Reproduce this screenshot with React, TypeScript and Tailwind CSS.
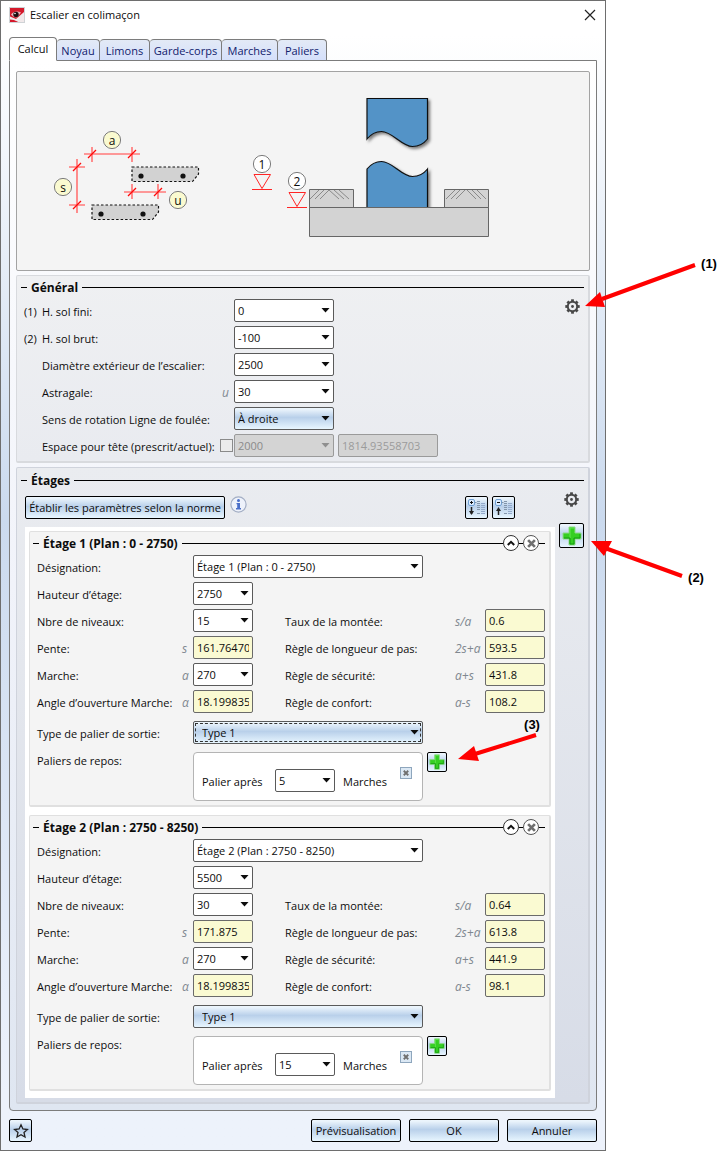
import React, { ReactNode, useId, useState } from 'react';
import { clsx } from 'clsx';

const INK = '#0c0c0c';

function CaretIcon({ className }: { className?: string }) {
  return (
    <svg className={clsx('pointer-events-none', className)} width="9" height="5" viewBox="0 0 9 5" aria-hidden="true">
      <path d="M0.5 0h8L4.5 4.500z" fill="currentColor" />
    </svg>
  );
}

function GearIcon() {
  return (
    <svg width="15" height="15" viewBox="0 0 15 15" fill="none" stroke="#484848" aria-hidden="true">
      <circle cx="7.5" cy="7.5" r="4.7" strokeWidth="2" />
      <circle cx="7.5" cy="7.5" r="1.4" fill="#484848" stroke="none" />
      {[0, 45, 90, 135, 180, 225, 270, 315].map((angle) => (
        <path key={angle} d="M7.5 0.3V2.8" strokeWidth="2.8" transform={`rotate(${angle} 7.5 7.5)`} />
      ))}
    </svg>
  );
}

function PlusIcon({ size }: { size: number }) {
  return (
    <svg width={size} height={size} viewBox="0 0 20 20" aria-hidden="true">
      <path d="M7 1h6v6h6v6h-6v6H7v-6H1V7h6z" fill="#35cf22" stroke="#8fd88a" strokeWidth="1" />
      <path d="M8 12V2h4" fill="none" stroke="#64e552" strokeWidth="1" />
      <path d="M2 12h6v6h4v-6h6V8" fill="none" stroke="#159d12" strokeWidth="1" />
    </svg>
  );
}

function CrossIcon({ size }: { size: number }) {
  return (
    <svg width={size} height={size} viewBox="0 0 8 8" aria-hidden="true">
      <path d="M1 1l6 6M7 1L1 7" stroke="#6f6f6f" strokeWidth="2.4" />
    </svg>
  );
}

function LevelsIcon({ expand }: { expand: boolean }) {
  return (
    <svg width="19" height="19" viewBox="0 0 19 19" fill="none" aria-hidden="true">
      <rect x="1.5" y="1.5" width="6" height="6" rx="1.5" fill="#dcecff" stroke="#6f9fd2" />
      <path d={expand ? 'M3 4.5h3M4.5 3v3' : 'M3 4.5h3'} stroke="#111" />
      <path d="M7.5 4.5h2" stroke="#8396ab" />
      <path d={expand ? 'M4.5 9v7' : 'M4.5 17v-6'} stroke="#222" strokeWidth="1.5" />
      <path d={expand ? 'M2 13h5l-2.5 4z' : 'M2 13h5l-2.5-4z'} fill="#222" />
      <path d="M10 3.5h3M10 5.5h3M10 7.5h3M10 9.5h3M10 11.5h3M10 15.5h3" stroke="#8396ab" />
      <path d="M14 5.5h4M14 7.5h4M14 9.5h4M14 11.5h4M14 13.5h4M14 15.5h4" stroke="#94aacb" />
    </svg>
  );
}

function InfoIcon() {
  return (
    <svg width="17" height="17" viewBox="0 0 17 17" aria-hidden="true">
      <circle cx="8.5" cy="8.5" r="7.6" fill="#eef2fb" stroke="#a3aec4" strokeWidth="1.2" />
      <circle cx="8.5" cy="4.6" r="1.5" fill="#4a6fc9" />
      <path d="M6.5 7h3.500v5h1v1.500h-5V12h1.200V8.300h-0.700z" fill="#4a6fc9" />
    </svg>
  );
}

function AppLogo() {
  return (
    <svg width="16" height="16" viewBox="0 0 16 16" aria-hidden="true">
      <rect x="0.5" y="0.5" width="15" height="15" fill="#d4192b" stroke="#cfd3d6" />
      <path d="M1 9.500L7 12l8-7v10H9L1 13z" fill="#f1e9ea" />
      <path d="M1 12.500l4 0.500l4 2H1z" fill="#d4192b" />
      <path d="M2 7.500C5 4 9 4 12 5.500L8 10.500C5.500 10.500 3.500 9.500 2 7.500z" fill="#e9b9bd" />
      <circle cx="7" cy="7.500" r="2.700" fill="#1d0d10" />
      <circle cx="6" cy="6.500" r="0.8" fill="#fff" />
    </svg>
  );
}

interface DropDownProps {
  id?: string;
  label?: string;
  value: string;
  className?: string;
  variant?: 'plain' | 'glossy' | 'focused';
  disabled?: boolean;
}

function DropDown({ id, label, value, className, variant = 'plain', disabled }: DropDownProps) {
  return (
    <span className={clsx('grid shrink-0 items-center', className)}>
      <select
        id={id}
        aria-label={label}
        defaultValue={value}
        disabled={disabled}
        className={clsx(
          'col-start-1 row-start-1 h-[23px] w-full appearance-none rounded-xs border pl-[3px]',
          disabled && 'border-[#9a9a9a] bg-[#d4d4d4] text-[#8a8a8a]',
          !disabled && 'border-[#5a5a5a]',
          !disabled && variant === 'plain' && 'bg-white',
          variant !== 'plain' && 'bg-linear-to-b from-[#ecf5fc] from-5% via-[#b9d0ea] via-45% to-[#e8f6ff]',
          variant === 'focused' ? 'outline-1 -outline-offset-3 outline-dashed outline-[#333]' : 'outline-none'
        )}
      >
        <option>{value}</option>
      </select>
      <CaretIcon className={clsx('col-start-1 row-start-1 mr-1 justify-self-end', disabled && 'text-[#8f8f8f]')} />
    </span>
  );
}

function ResultField({ id, value }: { id: string; value: string }) {
  return (
    <input
      id={id}
      readOnly
      defaultValue={value}
      className="h-[23px] w-[60px] rounded-xs border border-[#6a6a6a] bg-[#fafad2] px-[3px] outline-none"
    />
  );
}

function PushButton({ children, className, label }: { children: ReactNode; className?: string; label?: string }) {
  return (
    <button
      type="button"
      aria-label={label}
      className={clsx(
        'flex shrink-0 items-center justify-center overflow-hidden rounded-xs border border-black bg-linear-to-b from-[#ecf5fc] from-5% via-[#b9d0ea] via-45% to-[#e8f6ff] whitespace-nowrap',
        className
      )}
    >
      {children}
    </button>
  );
}

function GroupTitle({ children, actions }: { children: ReactNode; actions?: ReactNode }) {
  return (
    <div className="flex h-4 items-center">
      <span className="h-px w-1.5 bg-black" />
      <h2 className="px-1 pt-px text-xs font-bold">{children}</h2>
      <span className="h-px flex-1 bg-black" />
      {actions}
    </div>
  );
}

function StairDiagram() {
  return (
    <div className="overflow-hidden rounded-xs border border-[#a3a3a3] bg-[#f4f4f4]">
      <svg width="572" height="198" viewBox="17 72 572 198" fill="none" className="block" role="img" aria-label="Schéma de l’escalier">
        <defs>
          <filter id="post-shadow" x="-20%" y="-20%" width="150%" height="150%">
            <feDropShadow dx="2" dy="2" stdDeviation="1.5" floodColor="#000" floodOpacity="0.5" />
          </filter>
          <clipPath id="post-clip">
            <path d="M340 80h110v127H340z" />
          </clipPath>
        </defs>

        {/* steps */}
        <g fill="#d2d2d2" stroke="#111" strokeWidth="1.2" strokeDasharray="2.5 2">
          <path d="M132 167h66.5v7l-6 7.500H132z" />
          <path d="M92 205h66.500v7l-6 7.500H92z" />
        </g>
        <g fill="#111">
          <circle cx="141" cy="176" r="2.600" />
          <circle cx="183" cy="176" r="2.600" />
          <circle cx="101" cy="214" r="2.600" />
          <circle cx="143" cy="214" r="2.600" />
        </g>

        {/* dimension lines */}
        <path
          d="M84 154h56M92 147v15M132 147v15M77 159v54M69 167h16M69 205h16M124 192h42M132 184v15M158 184v15"
          stroke="#ff7a7a"
          strokeWidth="1.700"
        />
        <path
          d="M88 158l8-8M128 158l8-8M73 171l8-8M73 209l8-8M128 196l8-8M154 196l8-8"
          stroke="#ff0a0a"
          strokeWidth="1.300"
        />
        <g fill="#fafad0" stroke="#7c7c7c">
          <circle cx="112" cy="140" r="8.600" />
          <circle cx="63" cy="187" r="8.600" />
          <circle cx="178" cy="200" r="8.600" />
        </g>

        {/* levels */}
        <g fill="#fff" stroke="#7c7c7c">
          <circle cx="262" cy="164" r="8.600" />
          <circle cx="297" cy="181" r="8.600" />
        </g>
        <path
          d="M254 174.500h16.500L262 188.500zM252 189.500h20M289 192.500h16.500L297 206.500zM287 207.500h20"
          stroke="#ff2525"
        />
        <g fill={INK} fontSize="12" textAnchor="middle">
          <text x="112" y="145">a</text>
          <text x="63" y="192">s</text>
          <text x="178" y="205">u</text>
          <text x="262" y="169">1</text>
          <text x="297" y="186">2</text>
        </g>

        {/* central post */}
        <g clipPath="url(#post-clip)" fill="#5293c7" stroke="#111" strokeWidth="1.200">
          <path
            filter="url(#post-shadow)"
            d="M367 98.500h60.500V139c-4 5-10 7.500-15 7.500c-11 0-20-15-31-15c-5 0-10.500 2.500-14.500 7.500z"
          />
          <path
            filter="url(#post-shadow)"
            d="M367 215V169c4-5 9.500-7.500 14.500-7.500c11 0 20 15 31 15c5 0 11-2.500 15-7.500v46z"
          />
        </g>

        {/* slab */}
        <g fill="#d3d3d3" stroke="#666">
          <path d="M309.500 189.500h44v18h-44zM444.500 189.500h44v18h-44zM309.500 207.500h179v29h-179z" />
        </g>
        <path
          d="M319 190l-9 9M324 190l-9 9M329 190l-9 9M329 190l10 9M334 190l10 9M339 190l10 9M455 190l-9 9M460 190l-9 9M465 190l-9 9M467 190l9 9M472 190l9 9M477 190l9 9"
          stroke="#8a8a8a"
        />
      </svg>
    </div>
  );
}

interface GeneralRowProps {
  number?: string;
  label: string;
  symbol?: string;
  value: string;
  variant?: 'plain' | 'glossy';
}

function GeneralRow({ number, label, symbol, value, variant }: GeneralRowProps) {
  const id = useId();
  return (
    <div className="flex h-[23px] items-center">
      <span className="w-[18px] pt-0.5">{number}</span>
      <label htmlFor={id} className="w-[180px] pt-0.5 whitespace-nowrap">{label}</label>
      <i className="w-3 pt-0.5 text-xs text-[#808890]">{symbol}</i>
      <DropDown id={id} value={value} variant={variant} className="w-[100px]" />
    </div>
  );
}

function General() {
  return (
    <section className="rounded-xs border border-r-2 border-b-2 border-[#d8dade] bg-linear-to-b from-[#eff0f2] to-[#e9ebf0] pt-[3px] pr-1 pb-1 pl-1">
      <GroupTitle>Général</GroupTitle>
      <div className="flex items-start justify-between pt-1 pr-1 pl-[3px]">
        <div className="grid gap-1">
          <GeneralRow number="(1)" label="H. sol fini:" value="0" />
          <GeneralRow number="(2)" label="H. sol brut:" value="-100" />
          <GeneralRow label="Diamètre extérieur de l’escalier:" value="2500" />
          <GeneralRow label="Astragale:" symbol="u" value="30" />
          <GeneralRow label="Sens de rotation Ligne de foulée:" value="À droite" variant="glossy" />
          <div className="flex h-[23px] items-center">
            <label htmlFor="headroom" className="w-[196px] pt-0.5 pl-[18px] whitespace-nowrap">
              Espace pour tête (prescrit/actuel):
            </label>
            <input
              id="headroom"
              type="checkbox"
              className="mr-px size-[13px] appearance-none border border-[#8a8a8a] bg-[#ececec]"
            />
            <DropDown label="Espace prescrit" value="2000" disabled className="w-[100px]" />
            <input
              aria-label="Espace actuel"
              disabled
              defaultValue="1814.93558703"
              className="ml-1 h-[23px] w-[100px] rounded-xs border border-[#9a9a9a] bg-[#d4d4d4] px-[3px] text-[#9b9b9b]"
            />
          </div>
        </div>
        <button type="button" aria-label="Réglages généraux">
          <GearIcon />
        </button>
      </div>
    </section>
  );
}

interface Stage {
  title: string;
  height: string;
  levels: string;
  slope: string;
  tread: string;
  angle: string;
  ratio: string;
  pace: string;
  safety: string;
  comfort: string;
  restAfter: string;
  focused?: boolean;
}

const stages: Stage[] = [
  {
    title: 'Étage 1 (Plan : 0 - 2750)',
    height: '2750',
    levels: '15',
    slope: '161.764706',
    tread: '270',
    angle: '18.199835',
    ratio: '0.6',
    pace: '593.5',
    safety: '431.8',
    comfort: '108.2',
    restAfter: '5',
    focused: true
  },
  {
    title: 'Étage 2 (Plan : 2750 - 8250)',
    height: '5500',
    levels: '30',
    slope: '171.875',
    tread: '270',
    angle: '18.199835',
    ratio: '0.64',
    pace: '613.8',
    safety: '441.9',
    comfort: '98.1',
    restAfter: '15'
  }
];

function FieldLabel({ htmlFor, symbol, children }: { htmlFor: string; symbol?: string; children: ReactNode }) {
  return (
    <>
      <label htmlFor={htmlFor} className="pt-0.5 whitespace-nowrap">{children}</label>
      <i className="pt-0.5 text-xs text-[#808890]">{symbol}</i>
    </>
  );
}

function StageCard({ stage }: { stage: Stage }) {
  const id = useId();
  const [open, setOpen] = useState(true);

  return (
    <section className="rounded-xs border border-r-2 border-b-2 border-[#e0e0e0] bg-[#f4f4f4] pt-[3px] pr-1 pb-1 pl-[3px]">
      <GroupTitle
        actions={
          <>
            <button
              type="button"
              aria-label="Réduire"
              aria-expanded={open}
              onClick={() => setOpen(!open)}
              className="flex size-4 items-center justify-center rounded-full border border-[#333] bg-white"
            >
              <svg width="8" height="6" viewBox="0 0 8 6" fill="none" aria-hidden="true">
                <path d="M0.8 5L4 1.8L7.200 5" stroke="#111" strokeWidth="2" />
              </svg>
            </button>
            <span className="h-px w-1 bg-black" />
            <button
              type="button"
              aria-label="Supprimer l’étage"
              className="flex size-4 items-center justify-center rounded-full border border-[#555] bg-white"
            >
              <CrossIcon size={9} />
            </button>
            <span className="h-px w-1.5 bg-black" />
          </>
        }
      >
        {stage.title}
      </GroupTitle>
      {open && (
        <div className="pt-1 pl-1">
          <div className="grid auto-rows-[23px] grid-cols-[145px_11px_60px_32px_170px_30px_60px] items-center gap-y-1">
            <FieldLabel htmlFor={id + 'name'}>Désignation:</FieldLabel>
            <DropDown id={id + 'name'} value={stage.title} className="col-span-5 w-[230px]" />

            <FieldLabel htmlFor={id + 'height'}>Hauteur d’étage:</FieldLabel>
            <DropDown id={id + 'height'} value={stage.height} className="col-span-5 w-[60px]" />

            <FieldLabel htmlFor={id + 'levels'}>Nbre de niveaux:</FieldLabel>
            <DropDown id={id + 'levels'} value={stage.levels} />
            <span />
            <FieldLabel htmlFor={id + 'ratio'} symbol="s/a">Taux de la montée:</FieldLabel>
            <ResultField id={id + 'ratio'} value={stage.ratio} />

            <FieldLabel htmlFor={id + 'slope'} symbol="s">Pente:</FieldLabel>
            <ResultField id={id + 'slope'} value={stage.slope} />
            <span />
            <FieldLabel htmlFor={id + 'pace'} symbol="2s+a">Règle de longueur de pas:</FieldLabel>
            <ResultField id={id + 'pace'} value={stage.pace} />

            <FieldLabel htmlFor={id + 'tread'} symbol="a">Marche:</FieldLabel>
            <DropDown id={id + 'tread'} value={stage.tread} />
            <span />
            <FieldLabel htmlFor={id + 'safety'} symbol="a+s">Règle de sécurité:</FieldLabel>
            <ResultField id={id + 'safety'} value={stage.safety} />

            <FieldLabel htmlFor={id + 'angle'} symbol="α">Angle d’ouverture Marche:</FieldLabel>
            <ResultField id={id + 'angle'} value={stage.angle} />
            <span />
            <FieldLabel htmlFor={id + 'comfort'} symbol="a-s">Règle de confort:</FieldLabel>
            <ResultField id={id + 'comfort'} value={stage.comfort} />
          </div>

          <div className="mt-2 flex items-center">
            <label htmlFor={id + 'type'} className="w-[156px] pt-0.5">Type de palier de sortie:</label>
            <DropDown
              id={id + 'type'}
              value="Type 1"
              variant={stage.focused ? 'focused' : 'glossy'}
              className="w-[230px] [&>select]:pl-2"
            />
          </div>

          <div className="mt-2 flex items-start">
            <span className="w-[156px] pt-px">Paliers de repos:</span>
            <div className="flex h-[49px] w-[230px] items-end rounded-sm border border-[#b4b4b4] bg-white pb-2 pl-2">
              <label htmlFor={id + 'rest'} className="w-[73px] pb-0.5">Palier après</label>
              <DropDown id={id + 'rest'} value={stage.restAfter} className="w-[60px]" />
              <span className="w-[65px] pb-0.5 pl-2">Marches</span>
              <button
                type="button"
                aria-label="Supprimer le palier"
                className="mb-[13px] flex size-3 items-center justify-center border border-[#8ea6bd] bg-[#dbe8f4]"
              >
                <CrossIcon size={6} />
              </button>
            </div>
            <PushButton label="Ajouter un palier" className="ml-1 size-5">
              <PlusIcon size={16} />
            </PushButton>
          </div>
        </div>
      )}
    </section>
  );
}

function Stages() {
  return (
    <section className="rounded-xs border border-r-2 border-b-2 border-[#cfd3dc] bg-linear-to-b from-[#eaecf0] to-[#d7dce7] pt-1 pr-1 pb-1 pl-1">
      <GroupTitle>Étages</GroupTitle>
      <div className="flex gap-1 pt-1 pl-1">
        <div className="min-w-0 flex-1">
          <div className="mt-1 flex">
            <PushButton className="h-[23px] w-[200px]">Établir les paramètres selon la norme</PushButton>
            <button type="button" aria-label="Informations" className="ml-[5px] self-start">
              <InfoIcon />
            </button>
            <div className="mr-10 ml-auto flex gap-1">
              <PushButton label="Tout développer" className="size-[23px]">
                <LevelsIcon expand />
              </PushButton>
              <PushButton label="Tout réduire" className="size-[23px]">
                <LevelsIcon expand={false} />
              </PushButton>
            </div>
          </div>
          <div className="mt-2 grid gap-2 bg-white p-1 pb-[7px]">
            {stages.map((stage) => (
              <StageCard key={stage.title} stage={stage} />
            ))}
          </div>
        </div>
        <div className="flex flex-col items-center gap-4">
          <button type="button" aria-label="Réglages des étages">
            <GearIcon />
          </button>
          <PushButton label="Ajouter un étage" className="size-[25px]">
            <PlusIcon size={20} />
          </PushButton>
        </div>
      </div>
    </section>
  );
}

const tabs = [
  { name: 'Calcul', width: 'w-12' },
  { name: 'Noyau', width: 'w-[43px]' },
  { name: 'Limons', width: 'w-[50px]' },
  { name: 'Garde-corps', width: 'w-[72px]' },
  { name: 'Marches', width: 'w-14' },
  { name: 'Paliers', width: 'w-[49px]' }
];

function TabBar() {
  const [active, setActive] = useState('Calcul');
  return (
    <div role="tablist" className="relative flex items-end">
      {tabs.map(({ name, width }) => (
        <button
          key={name}
          type="button"
          role="tab"
          aria-selected={name === active}
          onClick={() => setActive(name)}
          className={clsx(
            'rounded-t-sm border whitespace-nowrap',
            width,
            name === active
              ? '-mb-px h-6 border-[#7c7c7c] border-b-white bg-white'
              : 'h-[21px] border-b-0 border-l-0 border-[#7c7c7c] bg-linear-to-b from-[#e3eaf6] to-[#d5e0fb] pt-px text-[#10206c]'
          )}
        >
          {name}
        </button>
      ))}
    </div>
  );
}

function Callouts() {
  return (
    <svg
      className="pointer-events-none absolute top-0 left-0"
      width="719"
      height="1151"
      viewBox="0 0 719 1151"
      fill="#ff0000"
      stroke="#ff0000"
      strokeWidth="4"
      aria-hidden="true"
    >
      <path d="M695 265L602 299M682 576L605 548M536 735L475 754" />
      <path d="M585 306l15-14l5 15z M591 541l21 0l-8 15z M458 759l16-13l5 15z" stroke="none" />
      <g
        fill="#000"
        stroke="none"
        className="font-['Liberation_Sans',Arial,sans-serif] text-[13px] font-bold"
        textAnchor="middle"
      >
        <text x="709" y="268">(1)</text>
        <text x="696" y="582">(2)</text>
        <text x="532" y="729">(3)</text>
      </g>
    </svg>
  );
}

export default function App() {
  return (
    <div className="relative min-h-screen bg-white pr-[113px] font-['Open_Sans','Noto_Sans',sans-serif] text-[11px] leading-4 text-[#0c0c0c]">
      <main className="border border-[#6e6e6e] bg-linear-to-b from-white from-3% via-[#cbdaee] via-45% to-[#edf2fb] to-95% px-2 pb-2">
        <header className="flex h-9 items-start justify-between pt-1.5">
          <div className="flex items-center gap-[5px]">
            <AppLogo />
            <h1>Escalier en colimaçon</h1>
          </div>
          <button type="button" aria-label="Fermer" className="mt-0.5 mr-px">
            <svg width="12" height="12" viewBox="0 0 12 12" aria-hidden="true">
              <path d="M1 1l10 10M11 1L1 11" stroke="#222" strokeWidth="1.200" />
            </svg>
          </button>
        </header>

        <TabBar />
        <div className="grid gap-1 rounded-b border border-[#7c7c7c] bg-linear-to-b from-white via-[#f1f3fa] to-[#dfe6f1] px-1.5 pt-2.5 pb-1.5">
          <StairDiagram />
          <General />
          <Stages />
        </div>

        <footer className="mt-2 flex gap-2">
          <PushButton label="Favoris" className="mr-auto size-[23px]">
            <svg width="16" height="16" viewBox="0 0 16 16" fill="none" aria-hidden="true">
              <path
                d="M8 1.800l1.900 4.200l4.500 0.500l-3.400 3l1 4.500L8 11.700L4 14l1-4.500L1.600 6.500l4.500-0.500z"
                stroke="#222"
                strokeWidth="1.300"
              />
            </svg>
          </PushButton>
          <PushButton className="h-[23px] w-[90px]">Prévisualisation</PushButton>
          <PushButton className="h-[23px] w-[90px]">OK</PushButton>
          <PushButton className="h-[23px] w-[90px]">Annuler</PushButton>
        </footer>
      </main>
      <Callouts />
    </div>
  );
}
